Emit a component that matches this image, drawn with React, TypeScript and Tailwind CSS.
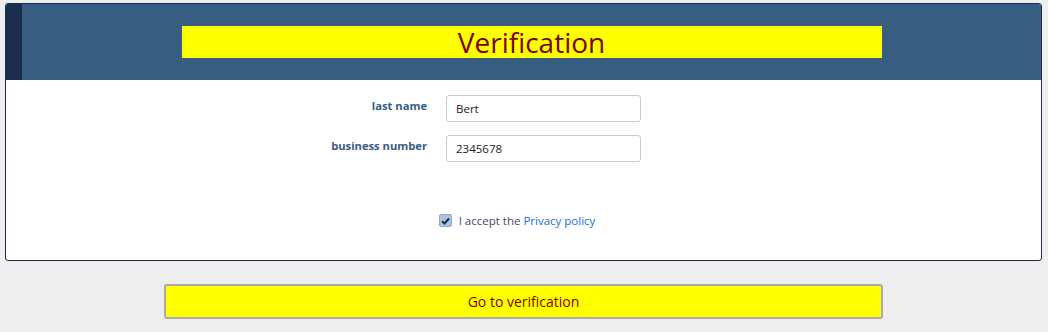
import React from "react";

export default function App() {
  return (
    <div className="min-h-[332px] w-full bg-[#eeeeee] pt-[3px] [font-family:'Open_Sans',sans-serif]">
      <div className="ml-[5px] mr-[6px] overflow-hidden rounded-[3px] border border-[#1b2e4f] bg-white">
        <div className="flex h-[76px]">
          <div className="w-[16px] bg-[#1a2f50]" />
          <div className="flex flex-1 items-center justify-center bg-[#375d80]">
            <div className="h-[32px] w-[700px] bg-[#ffff00] text-center text-[28px] leading-[32px] text-[#800000]">
              Verification
            </div>
          </div>
        </div>
        <div className="flex flex-col gap-[13px] pt-[15px]">
          <div className="flex items-start">
            <div className="w-[421px] pt-[2px] text-right text-[11.2px] font-bold leading-[17px] text-[#375c82]">
              last name
            </div>
            <input
              readOnly
              value="Bert"
              className="ml-[19px] h-[27px] w-[195px] rounded-[3px] border border-[#cccccc] bg-white px-[9px] text-[11.5px] text-[#222] outline-none"
            />
          </div>
          <div className="flex items-start">
            <div className="w-[421px] pt-[2px] text-right text-[11.2px] font-bold leading-[17px] text-[#375c82]">
              business number
            </div>
            <input
              readOnly
              value="2345678"
              className="ml-[19px] h-[27px] w-[195px] rounded-[3px] border border-[#cccccc] bg-white px-[9px] text-[11.5px] text-[#222] outline-none"
            />
          </div>
        </div>
        <div className="flex h-[98px] justify-center pr-[13px] pt-[50px]">
          <div className="flex h-[17px] items-center gap-[7px]">
            <span className="flex h-[13px] w-[13px] items-center justify-center rounded-[2px] border border-[#8fa9c8] bg-[#aec4de]">
              <svg width="9" height="8" viewBox="0 0 9 8">
                <path d="M1 4.2 L3.5 6.5 L8 1.5" fill="none" stroke="#1b2e4f" strokeWidth="2" />
              </svg>
            </span>
            <span className="text-[11.5px] leading-[17px] text-[#3b4b61]">
              I accept the <span className="text-[#1a6fd6]">Privacy policy</span>
            </span>
          </div>
        </div>
      </div>
      <div className="mt-[23px] flex justify-center pr-[1px]">
        <button className="h-[35px] w-[719px] rounded-[3px] border-2 border-[#aaaaaa] bg-[#ffff00] text-[14px] text-[#800000]">
          Go to verification
        </button>
      </div>
    </div>
  );
}
